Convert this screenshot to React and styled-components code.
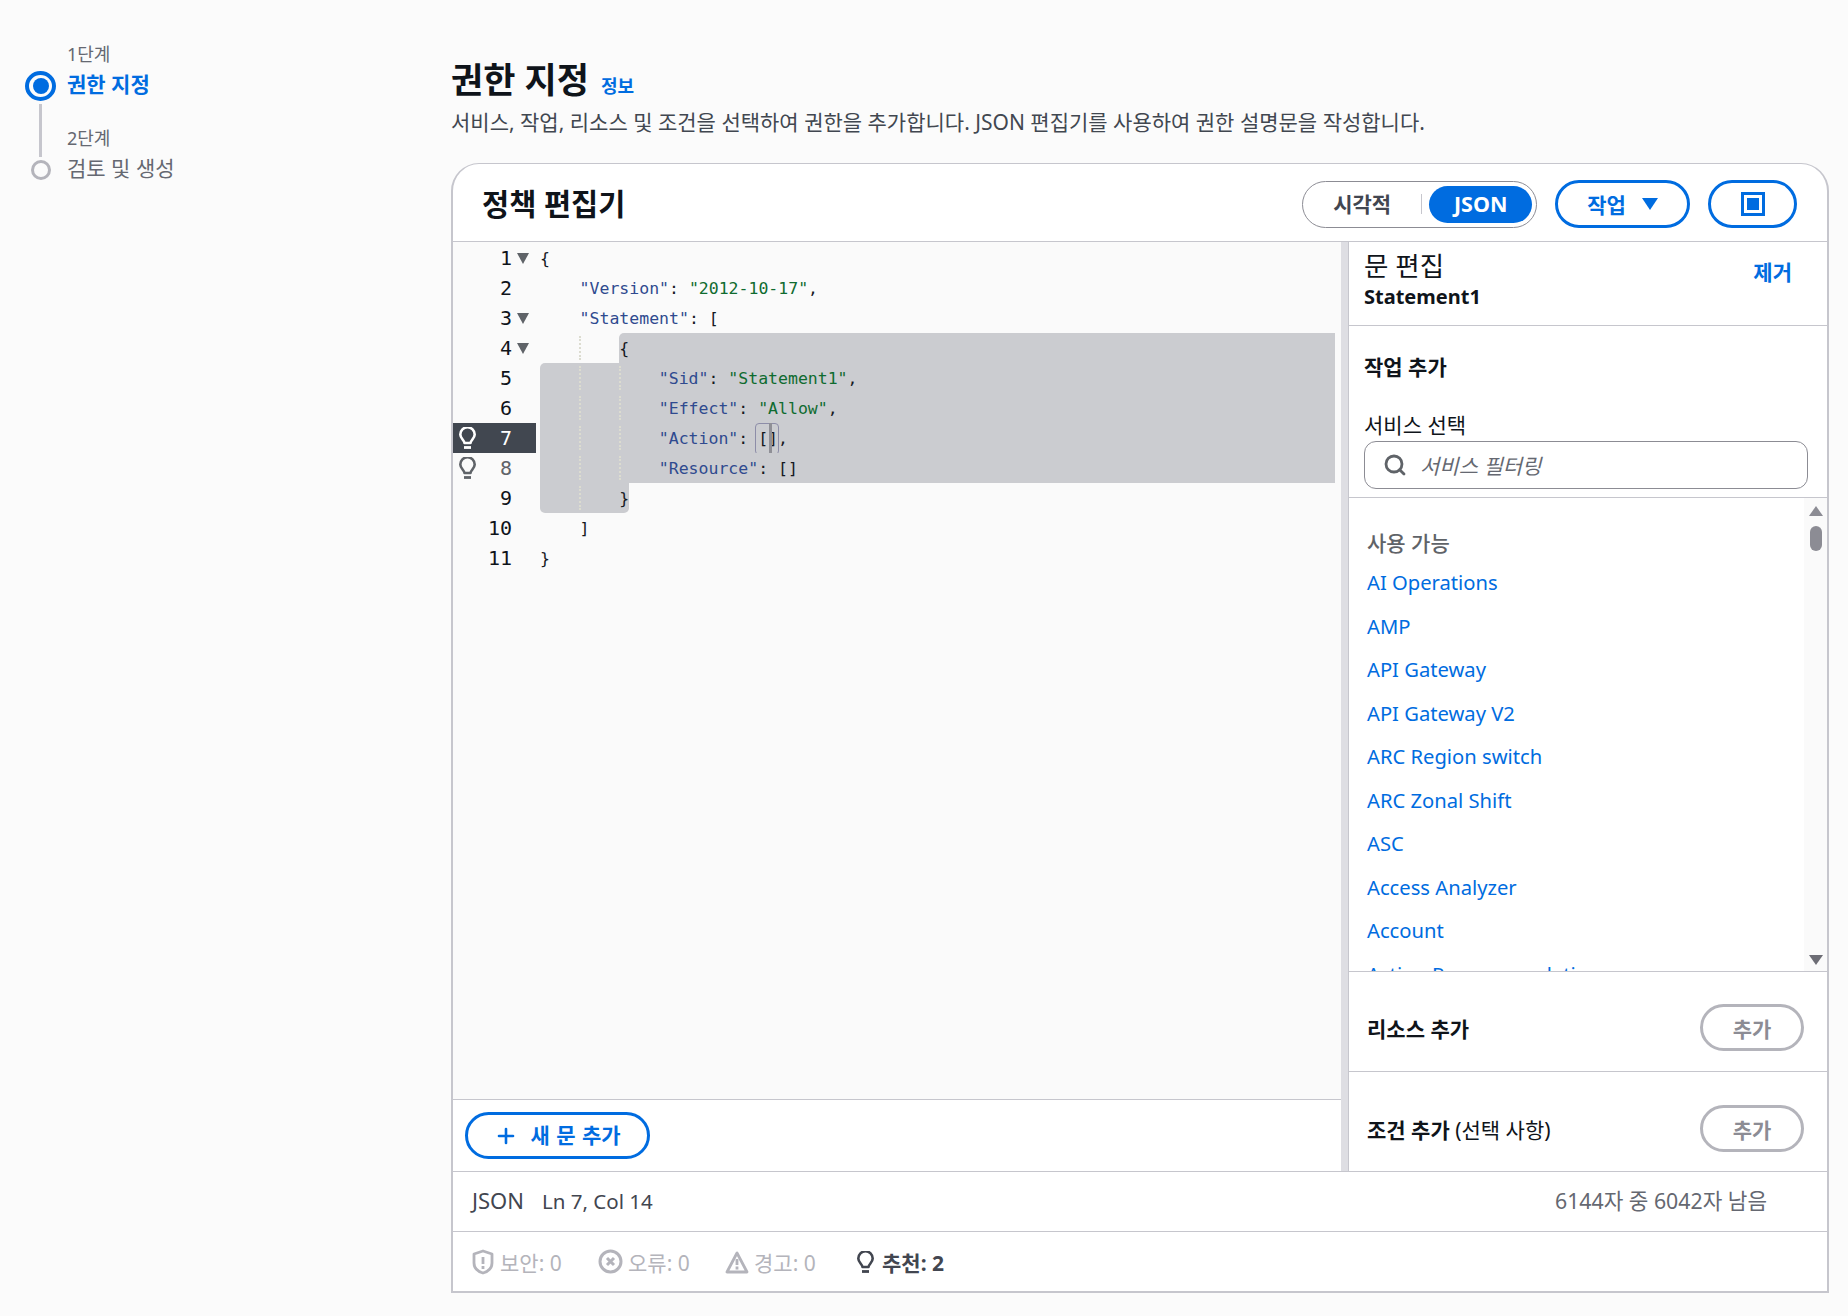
import React from "react";
import styled, { createGlobalStyle } from "styled-components";
import { Plus, Search } from "lucide-react";

const BLUE = "#006ce0";
const LINE = "#c6c6cd";
const SANS = `"Noto Sans", "Noto Sans CJK KR", sans-serif`;
const MONO = `"DejaVu Sans Mono", "Liberation Mono", monospace`;

const GlobalStyle = createGlobalStyle`
  html, body { margin: 0; padding: 0; background: #fbfbfb; }
  * { box-sizing: border-box; }
  body { font-family: ${SANS}; font-size: 21px; color: #0f141a; }
`;

const Page = styled.div`
  display: flex;
  width: 1848px;
  height: 1316px;
  overflow: hidden;
`;

/* stepper */
const Nav = styled.nav`
  width: 451px;
  flex: none;
  padding: 42px 0 0 25px;
`;

const Steps = styled.div`
  display: grid;
  grid-template-columns: 31px 1fr;
  grid-template-rows: 29px 30px 59px 20px;
  column-gap: 11px;
`;

const StepLabel = styled.div`
  grid-column: 2;
  font-size: 18px;
  color: #656871;
  line-height: 24px;
  align-self: ${(p) => (p.$end ? "end" : "start")};
  margin-bottom: ${(p) => (p.$end ? "10px" : "0")};
`;

const StepTitle = styled.div`
  grid-column: 2;
  font-size: 21px;
  line-height: 30px;
  font-weight: ${(p) => (p.$active ? 700 : 400)};
  color: ${(p) => (p.$active ? BLUE : "#656871")};
  margin-top: ${(p) => (p.$active ? "-2px" : "-7px")};
`;

const ActiveDot = styled.div`
  grid-column: 1;
  width: 31px;
  height: 30px;
  border-radius: 50%;
  border: 4px solid ${BLUE};
  display: flex;
  align-items: center;
  justify-content: center;
  &::after {
    content: "";
    width: 16px;
    height: 16px;
    border-radius: 50%;
    background: ${BLUE};
  }
`;

const Connector = styled.div`
  grid-column: 1;
  grid-row: 3;
  justify-self: center;
  width: 3px;
  height: 53px;
  margin-top: 3px;
  background: #c6c6cd;
`;

const IdleDot = styled.div`
  grid-column: 1;
  justify-self: center;
  width: 20px;
  height: 20px;
  border-radius: 50%;
  border: 3.5px solid #b4b4bb;
`;

/* main */
const Main = styled.main`
  width: 1378px;
  flex: none;
  padding-top: 54px;
`;

const TitleRow = styled.div`
  display: flex;
  align-items: baseline;
  gap: 12px;
  height: 52px;
`;

const PageTitle = styled.h1`
  margin: 0;
  font-size: 35px;
  line-height: 52px;
  font-weight: 700;
`;

const InfoLink = styled.a`
  color: ${BLUE};
  font-size: 18px;
  font-weight: 700;
`;

const Subtitle = styled.p`
  margin: 2px 0 0;
  font-size: 21px;
  line-height: 28px;
  color: #414750;
`;

const Card = styled.section`
  margin-top: 27px;
  height: 1130px;
  border: 2px solid ${LINE};
  border-top-width: 1px;
  border-top-left-radius: 28px;
  border-top-right-radius: 28px;
  background: #fff;
  display: flex;
  flex-direction: column;
  overflow: hidden;
`;

const CardHeader = styled.header`
  height: 78px;
  flex: none;
  display: flex;
  align-items: center;
  padding: 0 30px 0 29px;
  border-bottom: 1px solid ${LINE};
`;

const CardTitle = styled.h2`
  margin: 0;
  flex: 1;
  font-size: 29.5px;
  font-weight: 700;
`;

const HeaderActions = styled.div`
  display: flex;
  align-items: center;
  padding-top: 3px;
`;

const Toggle = styled.div`
  width: 235px;
  height: 47px;
  border: 1px solid #8c8c94;
  border-radius: 24px;
  display: flex;
  align-items: center;
  padding: 0 4px 0 0;
`;

const ToggleOff = styled.span`
  width: 121px;
  text-align: center;
  font-weight: 700;
  font-size: 21px;
  color: #424650;
  border-right: 1px solid #c6c6cd;
  line-height: 20px;
  height: 20px;
  display: block;
`;

const ToggleOn = styled.span`
  margin-left: 7px;
  width: 104px;
  height: 37px;
  border-radius: 19px;
  background: ${BLUE};
  color: #fff;
  font-weight: 700;
  font-size: 21.5px;
  text-align: center;
  line-height: 35px;
`;

const PillButton = styled.button`
  height: ${(p) => (p.$tall ? "48px" : "47px")};
  width: ${(p) => p.$w}px;
  margin-left: ${(p) => p.$ml || 0}px;
  border: 3px solid ${(p) => (p.$disabled ? "#b4b4bb" : BLUE)};
  border-radius: 24px;
  background: #fff;
  color: ${(p) => (p.$disabled ? "#8c8c94" : BLUE)};
  font: 700 21px ${SANS};
  word-spacing: ${(p) => p.$ws || 0}px;
  display: flex;
  align-items: center;
  justify-content: center;
  gap: ${(p) => p.$gap || 0}px;
  padding: 0;
`;

const AddLabel = styled.span`
  margin-top: -3px;
`;

const Body = styled.div`
  flex: 1;
  min-height: 0;
  display: flex;
`;

const EditorColumn = styled.div`
  width: 888px;
  flex: none;
  display: flex;
  flex-direction: column;
`;

const Editor = styled.div`
  flex: 1;
  display: flex;
  background: #fafafa;
  padding-top: 1px;
  min-height: 0;
`;

const Gutter = styled.div`
  width: 83px;
  flex: none;
`;

const GutterRow = styled.div`
  height: 30px;
  display: grid;
  grid-template-columns: 23px 36px 5px 13px;
  align-items: center;
  background: ${(p) => (p.$active ? "#414750" : "transparent")};
`;

const BulbSlot = styled.span`
  display: flex;
  justify-content: flex-end;
  color: ${(p) => (p.$active ? "#fff" : "#5f6368")};
`;

const LineNo = styled.span`
  grid-column: 2;
  font: 20px ${MONO};
  text-align: right;
  color: ${(p) => (p.$active ? "#fff" : p.$dim ? "#5f6368" : "#0f141a")};
`;

const Fold = styled.span`
  grid-column: 4;
  width: 0;
  height: 0;
  border-left: 6.5px solid transparent;
  border-right: 6.5px solid transparent;
  border-top: 11px solid #5f6368;
`;

const Code = styled.div`
  flex: 1;
  min-width: 0;
`;

const CodeLine = styled.div`
  position: relative;
  height: 30px;
  padding-left: ${(p) => 4 + p.$indent * 39.6}px;
  font: 16.5px/32px ${MONO};
  white-space: pre;
  color: #16191f;
`;

const Selection = styled.div`
  position: absolute;
  top: 0;
  bottom: 0;
  left: ${(p) => p.$left}px;
  right: ${(p) => p.$right}px;
  background: #cbccd0;
  border-top-left-radius: ${(p) => (p.$tl ? "5px" : 0)};
  border-bottom-left-radius: ${(p) => (p.$bl ? "5px" : 0)};
  border-bottom-right-radius: ${(p) => (p.$br ? "5px" : 0)};
`;

const Guide = styled.i`
  position: absolute;
  top: 3px;
  bottom: 3px;
  left: ${(p) => p.$left}px;
  border-left: 2px dotted #dcdcd0;
`;

const Tok = styled.span`
  position: relative;
  color: ${(p) => p.$c || "inherit"};
`;

const BracketBox = styled.span`
  position: relative;
  display: inline-block;
  &::before {
    content: "";
    position: absolute;
    left: -3px;
    right: -1px;
    top: 0;
    bottom: 0;
    border: 1px solid #8d8da8;
    border-radius: 4px;
  }
  &::after {
    content: "";
    position: absolute;
    left: 11px;
    top: 0;
    bottom: 0;
    width: 3px;
    background: #8f8f96;
  }
`;

const AddBar = styled.div`
  height: 72px;
  flex: none;
  border-top: 1px solid ${LINE};
  display: flex;
  align-items: center;
  padding-left: 12px;
`;

const Divider = styled.div`
  width: 7px;
  flex: none;
  background: #dedee3;
`;

const Panel = styled.aside`
  flex: 1;
  min-width: 0;
  display: flex;
  flex-direction: column;
  border-left: 1px solid ${LINE};
`;

const PanelHead = styled.div`
  height: 84px;
  flex: none;
  border-bottom: 1px solid ${LINE};
  padding: 6px 35px 0 15px;
  display: flex;
  justify-content: space-between;
`;

const PanelTitle = styled.div`
  font-size: 26.5px;
  line-height: 36px;
  color: #0f141a;
`;

const PanelSub = styled.div`
  font-size: 20px;
  line-height: 26px;
  font-weight: 700;
`;

const RemoveLink = styled.a`
  color: ${BLUE};
  font-size: 21px;
  font-weight: 700;
  line-height: 26px;
  margin-top: 11px;
`;

const ActionSection = styled.div`
  height: 172px;
  flex: none;
  border-bottom: 1px solid ${LINE};
  padding: 27px 19px 0 15px;
`;

const SectionLabel = styled.div`
  font-size: 21px;
  font-weight: 700;
  line-height: 28px;
`;

const FieldLabel = styled.div`
  font-size: 21px;
  line-height: 28px;
  margin-top: 30px;
  height: 30px;
`;

const SearchBox = styled.div`
  height: 48px;
  border: 1px solid #8c8c94;
  border-radius: 12px;
  background: #fff;
  display: flex;
  align-items: center;
  gap: 13px;
  padding-left: 18px;
  color: #5f6368;
`;

const Placeholder = styled.span`
  font-size: 21px;
  font-style: italic;
  color: #656871;
`;

const ListWrap = styled.div`
  height: 473px;
  flex: none;
  display: flex;
  overflow: hidden;
`;

const List = styled.div`
  flex: 1;
  min-width: 0;
  padding: 28px 0 0 18px;
`;

const ListHead = styled.div`
  font-size: 21px;
  line-height: 34px;
  color: #5f6368;
  font-weight: 500;
  margin-bottom: 1px;
`;

const ServiceLink = styled.a`
  display: block;
  height: 43.5px;
  line-height: 43.5px;
  font-size: 20.2px;
  color: ${BLUE};
  white-space: nowrap;
`;

const Scrollbar = styled.div`
  width: 23px;
  flex: none;
  background: #fafafa;
  display: flex;
  flex-direction: column;
  align-items: center;
  padding-top: 8px;
`;

const ArrowUp = styled.span`
  width: 0;
  height: 0;
  border-left: 7px solid transparent;
  border-right: 7px solid transparent;
  border-bottom: 10px solid #8c8c94;
`;

const ArrowDown = styled.span`
  width: 0;
  height: 0;
  margin-top: 404px;
  border-left: 7px solid transparent;
  border-right: 7px solid transparent;
  border-top: 10px solid #6d6d75;
`;

const Thumb = styled.span`
  width: 12px;
  height: 25px;
  margin-top: 10px;
  border-radius: 6px;
  background: #8c8c94;
`;

const AddSection = styled.div`
  height: ${(p) => p.$h}px;
  flex: none;
  border-top: 1px solid ${LINE};
  display: flex;
  align-items: center;
  justify-content: space-between;
  padding: 12px 23px 0 18px;
  font-size: 21px;
  b {
    font-weight: 700;
  }
`;

const StatusRow = styled.div`
  height: 60px;
  flex: none;
  border-top: 1px solid ${LINE};
  display: flex;
  align-items: center;
  justify-content: space-between;
  padding: 0 60px 4px 19px;
  font-size: 20.5px;
  color: #424650;
`;

const Lang = styled.span`
  font-size: 22px;
`;

const Position = styled.span`
  margin-left: 18px;
`;

const Remaining = styled.span`
  color: #656871;
  font-size: 21.3px;
`;

const Findings = styled.div`
  height: 60px;
  flex: none;
  border-top: 1px solid ${LINE};
  display: flex;
  align-items: center;
  padding-left: 18px;
`;

const Finding = styled.span`
  display: flex;
  align-items: center;
  gap: ${(p) => (p.$on ? 8 : 5)}px;
  width: ${(p) => p.$w}px;
  font-size: 21px;
  color: ${(p) => (p.$on ? "#424650" : "#b4b4bb")};
  font-weight: ${(p) => (p.$on ? 700 : 400)};
`;

const Bulb = ({ w = 17, h = 22 }) => (
  <svg width={w} height={h} viewBox="0 0 17 22" fill="none" stroke="currentColor" strokeWidth="2.6">
    <path d="M5.500 16c0-2.500-4.200-4.500-4.200-8.500a7.200 7.200 0 0 1 14.400 0c0 4-4.200 6-4.200 8.500z" strokeLinejoin="round" />
    <path d="M5 20.500h7" strokeWidth="2.800" />
  </svg>
);

const Shield = () => (
  <svg width="24" height="26" viewBox="0 0 24 26" fill="none" stroke="currentColor" strokeWidth="2.8">
    <path d="M12 2 3 5v9c0 5 4 8.500 9 10 5-1.500 9-5 9-10V5z" strokeLinejoin="round" />
    <path d="M12 8v7M12 17v3" />
  </svg>
);

const CircleX = () => (
  <svg width="25" height="25" viewBox="0 0 25 25" fill="none" stroke="currentColor" strokeWidth="3">
    <circle cx="12.500" cy="12.500" r="10.500" />
    <path d="m9 9 7 7M16 9l-7 7" />
  </svg>
);

const Warning = () => (
  <svg width="24" height="24" viewBox="0 0 24 24" fill="none" stroke="currentColor" strokeWidth="2.800">
    <path d="M12 3 2 22h20z" strokeLinejoin="round" />
    <path d="M12 9v6M12 16.500v3" />
  </svg>
);

const ExpandIcon = () => (
  <svg width="24" height="24" viewBox="0 0 24 24" fill="none">
    <rect x="1.500" y="1.500" width="21" height="21" stroke={BLUE} strokeWidth="3" />
    <rect x="6" y="6" width="12" height="12" fill={BLUE} />
  </svg>
);

const Caret = () => (
  <svg width="16" height="14" viewBox="0 0 16 14">
    <path d="M0 1h16L8 13z" fill={BLUE} />
  </svg>
);

const KEY = "#2f4a8f";
const STR = "#0f6b2f";

const Key = ({ children }) => <Tok $c={KEY}>{children}</Tok>;
const Str = ({ children }) => <Tok $c={STR}>{children}</Tok>;

const gutter = [
  { n: 1, fold: true },
  { n: 2 },
  { n: 3, fold: true },
  { n: 4, fold: true },
  { n: 5 },
  { n: 6 },
  { n: 7, active: true, bulb: true },
  { n: 8, bulb: true, dim: true },
  { n: 9 },
  { n: 10 },
  { n: 11 },
];

const services = [
  "AI Operations",
  "AMP",
  "API Gateway",
  "API Gateway V2",
  "ARC Region switch",
  "ARC Zonal Shift",
  "ASC",
  "Access Analyzer",
  "Account",
  "Action Recommendations",
];

export default function App() {
  return (
    <Page>
      <GlobalStyle />
      <Nav>
        <Steps>
          <StepLabel>1단계</StepLabel>
          <ActiveDot />
          <StepTitle $active>권한 지정</StepTitle>
          <Connector />
          <StepLabel $end>2단계</StepLabel>
          <IdleDot />
          <StepTitle>검토 및 생성</StepTitle>
        </Steps>
      </Nav>
      <Main>
        <TitleRow>
          <PageTitle>권한 지정</PageTitle>
          <InfoLink>정보</InfoLink>
        </TitleRow>
        <Subtitle>
          서비스, 작업, 리소스 및 조건을 선택하여 권한을 추가합니다. JSON 편집기를 사용하여 권한 설명문을 작성합니다.
        </Subtitle>
        <Card>
          <CardHeader>
            <CardTitle>정책 편집기</CardTitle>
            <HeaderActions>
              <Toggle>
                <ToggleOff>시각적</ToggleOff>
                <ToggleOn>JSON</ToggleOn>
              </Toggle>
              <PillButton $tall $w={135} $ml={18} $gap={16}>
                작업 <Caret />
              </PillButton>
              <PillButton $tall $w={89} $ml={18}>
                <ExpandIcon />
              </PillButton>
            </HeaderActions>
          </CardHeader>
          <Body>
            <EditorColumn>
              <Editor>
                <Gutter>
                  {gutter.map((g) => (
                    <GutterRow key={g.n} $active={g.active}>
                      {g.bulb && (
                        <BulbSlot $active={g.active}>
                          <Bulb />
                        </BulbSlot>
                      )}
                      <LineNo $active={g.active} $dim={g.dim}>
                        {g.n}
                      </LineNo>
                      {g.fold && <Fold />}
                    </GutterRow>
                  ))}
                </Gutter>
                <Code>
                  <CodeLine $indent={0}>{"{"}</CodeLine>
                  <CodeLine $indent={1}>
                    <Key>"Version"</Key>: <Str>"2012-10-17"</Str>,
                  </CodeLine>
                  <CodeLine $indent={1}>
                    <Key>"Statement"</Key>: [
                  </CodeLine>
                  <CodeLine $indent={2}>
                    <Selection $left={83} $right={6} $tl />
                    <Guide $left={43} />
                    <Tok>{"{"}</Tok>
                  </CodeLine>
                  <CodeLine $indent={3}>
                    <Selection $left={4} $right={6} $tl />
                    <Guide $left={43} />
                    <Guide $left={83} />
                    <Tok $c={KEY}>"Sid"</Tok>
                    <Tok>: </Tok>
                    <Str>"Statement1"</Str>
                    <Tok>,</Tok>
                  </CodeLine>
                  <CodeLine $indent={3}>
                    <Selection $left={4} $right={6} />
                    <Guide $left={43} />
                    <Guide $left={83} />
                    <Tok $c={KEY}>"Effect"</Tok>
                    <Tok>: </Tok>
                    <Str>"Allow"</Str>
                    <Tok>,</Tok>
                  </CodeLine>
                  <CodeLine $indent={3}>
                    <Selection $left={4} $right={6} />
                    <Guide $left={43} />
                    <Guide $left={83} />
                    <Tok $c={KEY}>"Action"</Tok>
                    <Tok>: </Tok>
                    <BracketBox>[]</BracketBox>
                    <Tok>,</Tok>
                  </CodeLine>
                  <CodeLine $indent={3}>
                    <Selection $left={4} $right={6} />
                    <Guide $left={43} />
                    <Guide $left={83} />
                    <Tok $c={KEY}>"Resource"</Tok>
                    <Tok>: []</Tok>
                  </CodeLine>
                  <CodeLine $indent={2}>
                    <Selection $left={4} $right={712} $bl $br />
                    <Guide $left={43} />
                    <Tok>{"}"}</Tok>
                  </CodeLine>
                  <CodeLine $indent={1}>]</CodeLine>
                  <CodeLine $indent={0}>{"}"}</CodeLine>
                </Code>
              </Editor>
              <AddBar>
                <PillButton $w={185} $gap={12} $ws={1}>
                  <Plus size={24} strokeWidth={2.6} />
                  <AddLabel>새 문 추가</AddLabel>
                </PillButton>
              </AddBar>
            </EditorColumn>
            <Divider />
            <Panel>
              <PanelHead>
                <div>
                  <PanelTitle>문 편집</PanelTitle>
                  <PanelSub>Statement1</PanelSub>
                </div>
                <RemoveLink>제거</RemoveLink>
              </PanelHead>
              <ActionSection>
                <SectionLabel>작업 추가</SectionLabel>
                <FieldLabel>서비스 선택</FieldLabel>
                <SearchBox>
                  <Search size={24} strokeWidth={2.8} />
                  <Placeholder>서비스 필터링</Placeholder>
                </SearchBox>
              </ActionSection>
              <ListWrap>
                <List>
                  <ListHead>사용 가능</ListHead>
                  {services.map((s) => (
                    <ServiceLink key={s}>{s}</ServiceLink>
                  ))}
                </List>
                <Scrollbar>
                  <ArrowUp />
                  <Thumb />
                  <ArrowDown />
                </Scrollbar>
              </ListWrap>
              <AddSection $h={100}>
                <b>리소스 추가</b>
                <PillButton $w={104} $disabled>
                  추가
                </PillButton>
              </AddSection>
              <AddSection $h={102}>
                <span>
                  <b>조건 추가</b> (선택 사항)
                </span>
                <PillButton $w={104} $disabled>
                  추가
                </PillButton>
              </AddSection>
            </Panel>
          </Body>
          <StatusRow>
            <span>
              <Lang>JSON</Lang>
              <Position>Ln 7, Col 14</Position>
            </span>
            <Remaining>6144자 중 6042자 남음</Remaining>
          </StatusRow>
          <Findings>
            <Finding $w={127}>
              <Shield /> 보안: 0
            </Finding>
            <Finding $w={127}>
              <CircleX /> 오류: 0
            </Finding>
            <Finding $w={132}>
              <Warning /> 경고: 0
            </Finding>
            <Finding $on>
              <Bulb /> 추천: 2
            </Finding>
          </Findings>
        </Card>
      </Main>
    </Page>
  );
}
